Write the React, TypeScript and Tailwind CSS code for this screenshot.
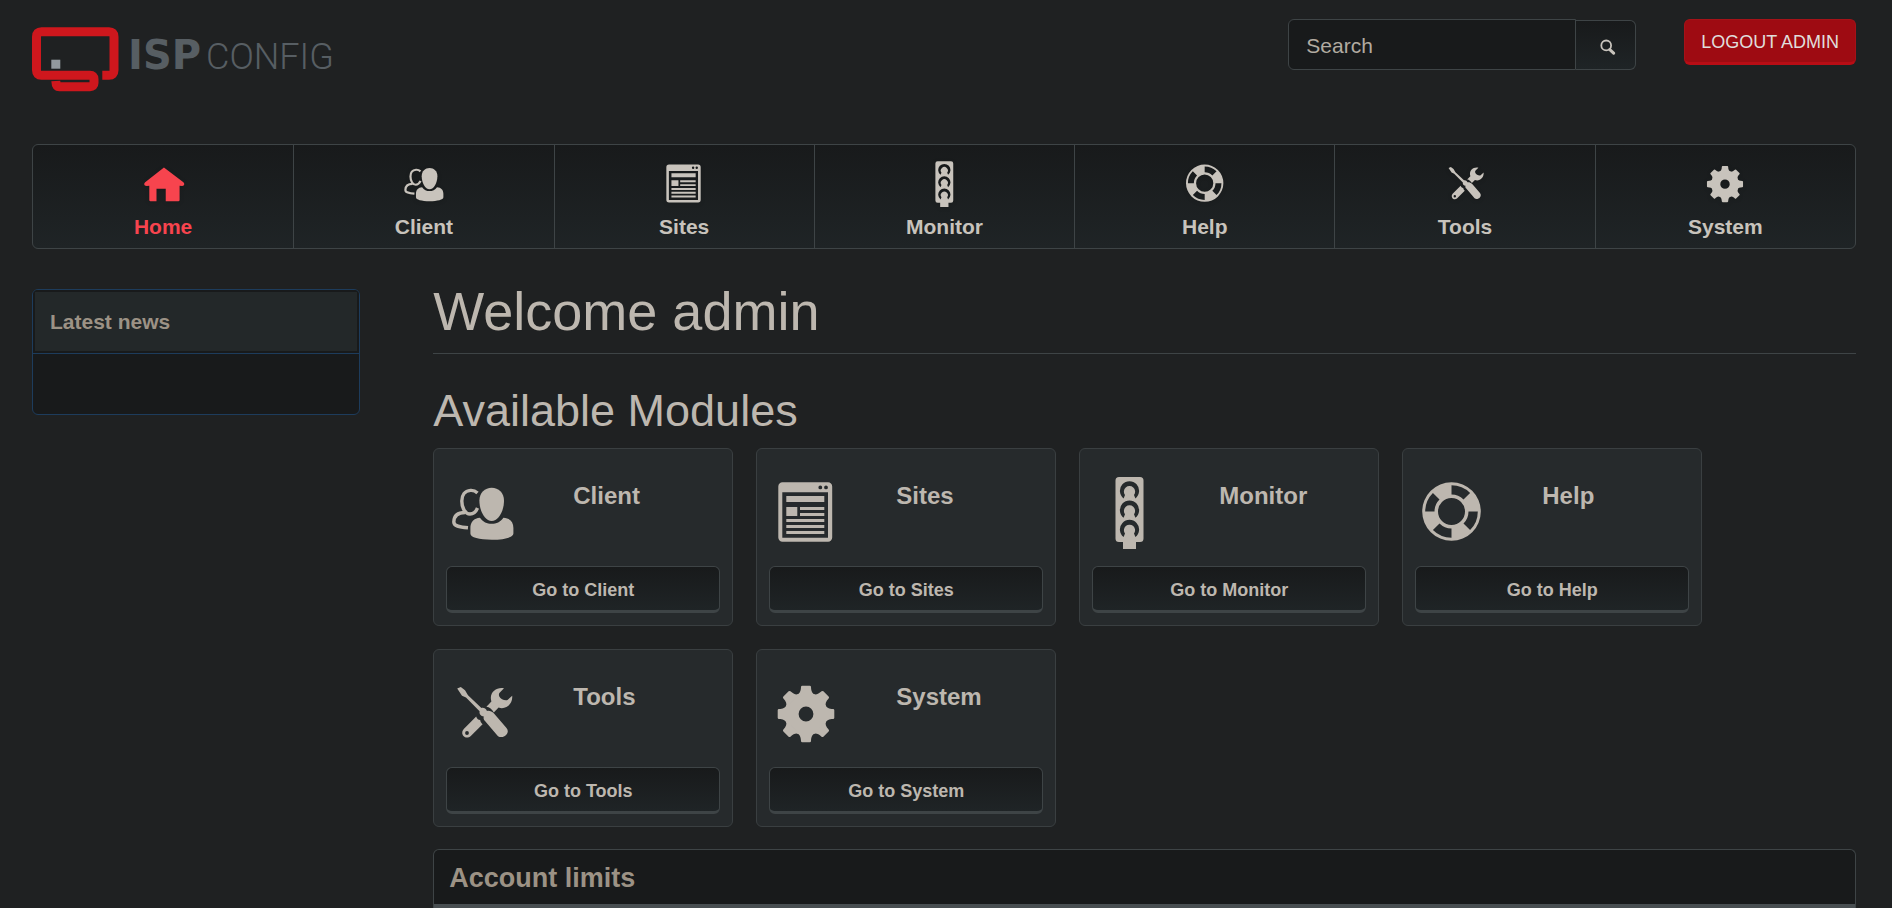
import React from 'react';

type IconName = 'home' | 'client' | 'sites' | 'monitor' | 'help' | 'tools' | 'system';

interface Module {
    icon: IconName;
    label: string;
}

const modules: Module[] = [
    { icon: 'client', label: 'Client' },
    { icon: 'sites', label: 'Sites' },
    { icon: 'monitor', label: 'Monitor' },
    { icon: 'help', label: 'Help' },
    { icon: 'tools', label: 'Tools' },
    { icon: 'system', label: 'System' },
];

const navItems: Module[] = [{ icon: 'home', label: 'Home' }, ...modules];

const gearTeeth = [0, 45, 90, 135, 180, 225, 270, 315];

// All glyphs share one 72x80 canvas so they line up in the nav and in the cards
const glyphs: Record<IconName, React.ReactNode> = {
    home: (
        <path d="M37.5 14.8 68 38c2.6 2.5 1.2 6-2 6l-4-.3V66q0 2-2 2H40.3V48.2H25.8V68h-9.3q-2 0-2-2V43.7L10.5 44c-4 0-5.3-3.5-2.5-6Z" />
    ),
    client: (
        <>
            <path d="M44.7 15.7C51.5 15.7 57 20.5 57 28.5 57 39 51.5 49 44.7 49S32.4 39 32.4 28.5C32.4 20.5 38 15.7 44.7 15.7Z" />
            <path d="M33 45.7c3 4.3 7 6.1 11.7 6.1s8.7-1.8 11.7-6.1c6.6.3 10 4.3 10 10.3v5.5c0 4-9.4 6.2-21.5 6.2-12.9 0-21.5-2.2-21.5-6.2V56c0-6 3.6-10 9.6-10.3Z" />
            <path d="M30.5 21c-2.3-2.2-4.5-2.8-7-2.6-6 .4-8.7 5.1-8.7 10.6 0 7 3.4 13 8.2 13 3.5 0 5.8-2 7.5-6M18 40.5C10.5 40.5 7 43.5 6.8 50c0 4 5 5 14.2 5.8" fill="none" stroke="currentColor" strokeWidth="3.4" />
        </>
    ),
    sites: (
        <>
            <path fillRule="evenodd" d="M12.5 10.3H58a4.2 4.2 0 0 1 4.2 4.2v51a4.2 4.2 0 0 1-4.2 4.2H12.5a4.2 4.2 0 0 1-4.2-4.2v-51a4.2 4.2 0 0 1 4.2-4.2ZM12.3 20.3v45.4H58V20.3ZM50.3 13.5a1.9 1.9 0 1 0 0 3.8 1.9 1.9 0 0 0 0-3.8ZM56 13.5a1.9 1.9 0 1 0 0 3.8 1.9 1.9 0 0 0 0-3.8Z" />
            <path d="M16.3 24h38v6h-38ZM16.3 35h11v9h-11ZM30 35h24.3v3H30ZM30 41h24.3v3H30ZM16.3 47h38v3h-38ZM16.3 53h38v3h-38ZM16.3 59h38v3h-38Z" />
        </>
    ),
    monitor: (
        <path
            fillRule="evenodd"
            d="M26 5h21a3.5 3.5 0 0 1 3.5 3.5v58A3.5 3.5 0 0 1 47 70h-4v7H30v-7h-4a3.5 3.5 0 0 1-3.5-3.5v-58A3.5 3.5 0 0 1 26 5ZM30.6 26.4A9.6 9.6 0 1 1 42.4 26.4L41 23A5.6 5.6 0 1 0 32 23ZM30.6 45.7A9.6 9.6 0 1 1 42.4 45.7L41 42.3A5.6 5.6 0 1 0 32 42.3ZM30.6 65A9.6 9.6 0 1 1 42.4 65L41 61.6A5.6 5.6 0 1 0 32 61.6Z"
        />
    ),
    help: (
        <path
            fillRule="evenodd"
            d="M35.5 10.2a29.3 29.3 0 1 0 0 58.6 29.3 29.3 0 0 0 0-58.6ZM35.5 26a13.5 13.5 0 1 1 0 27 13.5 13.5 0 0 1 0-27ZM35.5 13.2A26.3 26.3 0 0 1 54.1 20.9L47.5 27.5A17 17 0 0 0 35.5 22.5ZM61.8 39.5A26.3 26.3 0 0 1 54.1 58.1L47.5 51.5A17 17 0 0 0 52.5 39.5ZM35.5 65.8A26.3 26.3 0 0 1 16.9 58.1L23.5 51.5A17 17 0 0 0 35.5 56.5ZM9.2 39.5A26.3 26.3 0 0 1 16.9 20.9L23.5 27.5A17 17 0 0 0 18.5 39.5Z"
        />
    ),
    tools: (
        <>
            <path d="M10.2 15.6 13.8 14 18 17.2 21 22.2 34.4 35c1.8-.8 4.4.2 5.6 3 2.5-.5 5 .5 7 2.5l12.5 14.5c2 2.5 1.5 5-.2 6.8-2.2 2.5-5.8 3-8.3 1.4L38 48c-1.5-1.5-1.7-3-1.2-4.5-2.8-.5-4.8-2-4.2-5.2L19 24.6l-4-1.8Z" />
            <path d="M57 15.2C50 13.5 41.5 19 44.4 28.6l-5 5.2c3.1.2 5.6 2.7 7.4 5.6l4.8-4.8C59 37 66 31 65.2 22.8L60.5 27c-2.5 1-7-1-8.2-3.5-.8-2-.3-3 .3-3.7Z" />
            <path fillRule="evenodd" d="M29.2 43.4c.4 2 2 3.2 4 3.6.2 1.8 1 3 2.4 4.2L23.8 63c-2.5 2.4-6.2 2-7.8-.4-1.5-2.6-.7-5.1 1-6.8ZM20 58.1a1.9 1.9 0 1 0 0 3.8 1.9 1.9 0 0 0 0-3.8Z" />
        </>
    ),
    system: (
        <g transform="translate(36 41)">
            <path fillRule="evenodd" d="M0-21.5a21.5 21.5 0 1 0 0 43 21.5 21.5 0 0 0 0-43ZM0-7.4a7.4 7.4 0 1 1 0 14.8 7.4 7.4 0 0 1 0-14.8Z" />
            {gearTeeth.map((angle) => (
                <path key={angle} transform={`rotate(${angle})`} d="M-9-19C-6-21-5.2-23-5-27q0-1.3 1.3-1.3h7.4Q5-28.3 5-27C5.2-23 6-21 9-19Z" />
            ))}
        </g>
    ),
};

const Glyph: React.FC<{ name: IconName; className?: string }> = ({ name, className }) => (
    <svg className={className} viewBox="0 0 72 80" fill="currentColor" aria-hidden="true">
        {glyphs[name]}
    </svg>
);

const Logo: React.FC = () => (
    <a href="#" aria-label="ISPConfig" className="block">
        <svg className="h-[66px] w-[304px]" viewBox="0 0 304 66" aria-hidden="true">
            <path
                d="M70.3 48.2H77Q82 48.2 82 43.2V9.8Q82 4.8 77 4.8H9.5Q4.5 4.8 4.5 9.8V43.2Q4.5 48.2 9.5 48.2H58Q62 48.2 62 52V56Q62 59.7 58 59.7H27.5Q24 59.7 23.8 54"
                fill="none"
                stroke="#cf171d"
                strokeWidth="9"
            />
            <rect x="19.3" y="32.7" width="9" height="9" fill="#92999e" />
            <text x="96" y="42" fill="#575e63" fontFamily="DejaVu Sans" fontWeight="700" fontSize="40">ISP</text>
            <text x="174" y="42" fill="#575e63" fontFamily="Roboto" fontWeight="300" fontSize="36">CONFIG</text>
        </svg>
    </a>
);

const Header: React.FC = () => (
    <header className="flex h-36 items-start justify-between pt-[19px]">
        <div className="pt-2">
            <Logo />
        </div>
        <div className="flex items-start gap-12">
            <form className="flex items-end" onSubmit={(e) => e.preventDefault()}>
                <input
                    type="text"
                    aria-label="Search"
                    placeholder="Search"
                    className="h-[51px] w-72 rounded-l-md border border-[#3e4446] bg-[#181a1b] px-[17px] pt-0.5 text-[21px] text-[#c8c3bc] placeholder:text-[#b2aba1] outline-none"
                />
                <button
                    type="submit"
                    aria-label="Submit search"
                    className="flex h-[50px] w-[60px] items-center justify-center rounded-r-md border border-l-0 border-[#3e4446] bg-linear-to-b from-[#181a1b] to-[#1f2426] pt-1 pl-1 text-[#c8c3bc]"
                >
                    <svg className="h-4 w-4" viewBox="0 0 16 16" fill="none" stroke="currentColor" aria-hidden="true">
                        <circle cx="6.2" cy="6.4" r="4.9" strokeWidth="1.8" />
                        <path d="M9.8 10.6 13.6 14.2" strokeWidth="3" strokeLinecap="round" />
                    </svg>
                </button>
            </form>
            <button
                type="button"
                className="rounded-md border border-b-3 border-[#a51218] border-b-[#b80d15] bg-[#9e0b12] px-4 pt-[9px] pb-[6px] text-lg leading-[27px] text-[#e0dedb]"
            >
                LOGOUT ADMIN
            </button>
        </div>
    </header>
);

const MainNav: React.FC = () => (
    <nav className="grid grid-cols-7 overflow-hidden rounded-md border border-[#3e4446] bg-linear-to-b from-[#181a1b] to-[#1f2426]">
        {navItems.map((item) => (
            <a
                key={item.label}
                href="#"
                className={`flex flex-col items-center border-l border-[#3e4446] pt-[13px] pb-[7px] text-[21px] leading-7 font-bold first:border-l-0 ${
                    item.icon === 'home' ? 'text-[#f7444e]' : 'text-[#c8c3bc]'
                }`}
            >
                <Glyph name={item.icon} className="h-[51px] w-[46px] drop-shadow-sm" />
                <span className="mt-1">{item.label}</span>
            </a>
        ))}
    </nav>
);

const ModuleCard: React.FC<{ module: Module }> = ({ module }) => (
    <div className="w-[300px] rounded-md border border-[#3a3f41] bg-[#262a2c] px-3 pt-[23px] pb-3">
        <div className="flex items-start gap-[54px] pl-px">
            <Glyph name={module.icon} className="h-20 w-[72px]" />
            <h3 className="mt-2 text-2xl leading-8 font-bold">{module.label}</h3>
        </div>
        <button
            type="button"
            className="mt-[14px] block w-full rounded-md border border-b-3 border-[#3e4446] bg-linear-to-b from-[#181a1b] to-[#1f2426] pt-[10px] pb-[6px] text-lg leading-[27px] font-bold"
        >
            Go to {module.label}
        </button>
    </div>
);

const Sidebar: React.FC = () => (
    <aside className="mt-2 w-[18%] self-start overflow-hidden rounded-md border border-[#1d3c5c] bg-[#181a1b]">
        <h2 className="border-2 border-[#181a1b] bg-[#232829] px-[15px] pt-[18px] pb-[17px] text-[21px] leading-6 font-bold text-[#9c9285]">
            Latest news
        </h2>
        <div className="h-[61px] border-t border-[#1d3c5c]"></div>
    </aside>
);

const App: React.FC = () => {
    return (
        <div className="bg-[#1f2122] pr-9 pl-8 font-['Liberation_Sans',Arial,sans-serif] text-lg text-[#bdb7af]">
            <Header />
            <MainNav />
            <div className="flex justify-between pt-8">
                <Sidebar />
                <main className="w-[78%]">
                    <h1 className="border-b border-[#3e4446] pb-3 text-[54px] leading-[60px]">Welcome admin</h1>
                    <h2 className="mt-8 mb-3 text-[45px] leading-[50px]">Available Modules</h2>
                    <div className="flex flex-wrap gap-[23px]">
                        {modules.map((module) => (
                            <ModuleCard key={module.label} module={module} />
                        ))}
                    </div>
                    <section className="mt-[22px] rounded-t-md border border-b-0 border-[#3e4446] bg-[#181a1b]">
                        <h2 className="px-[15px] pt-[10px] pb-2 text-[27px] leading-9 font-bold text-[#9c9285]">Account limits</h2>
                        <div className="h-1 bg-[#484e51]"></div>
                    </section>
                </main>
            </div>
        </div>
    );
};

export default App;
